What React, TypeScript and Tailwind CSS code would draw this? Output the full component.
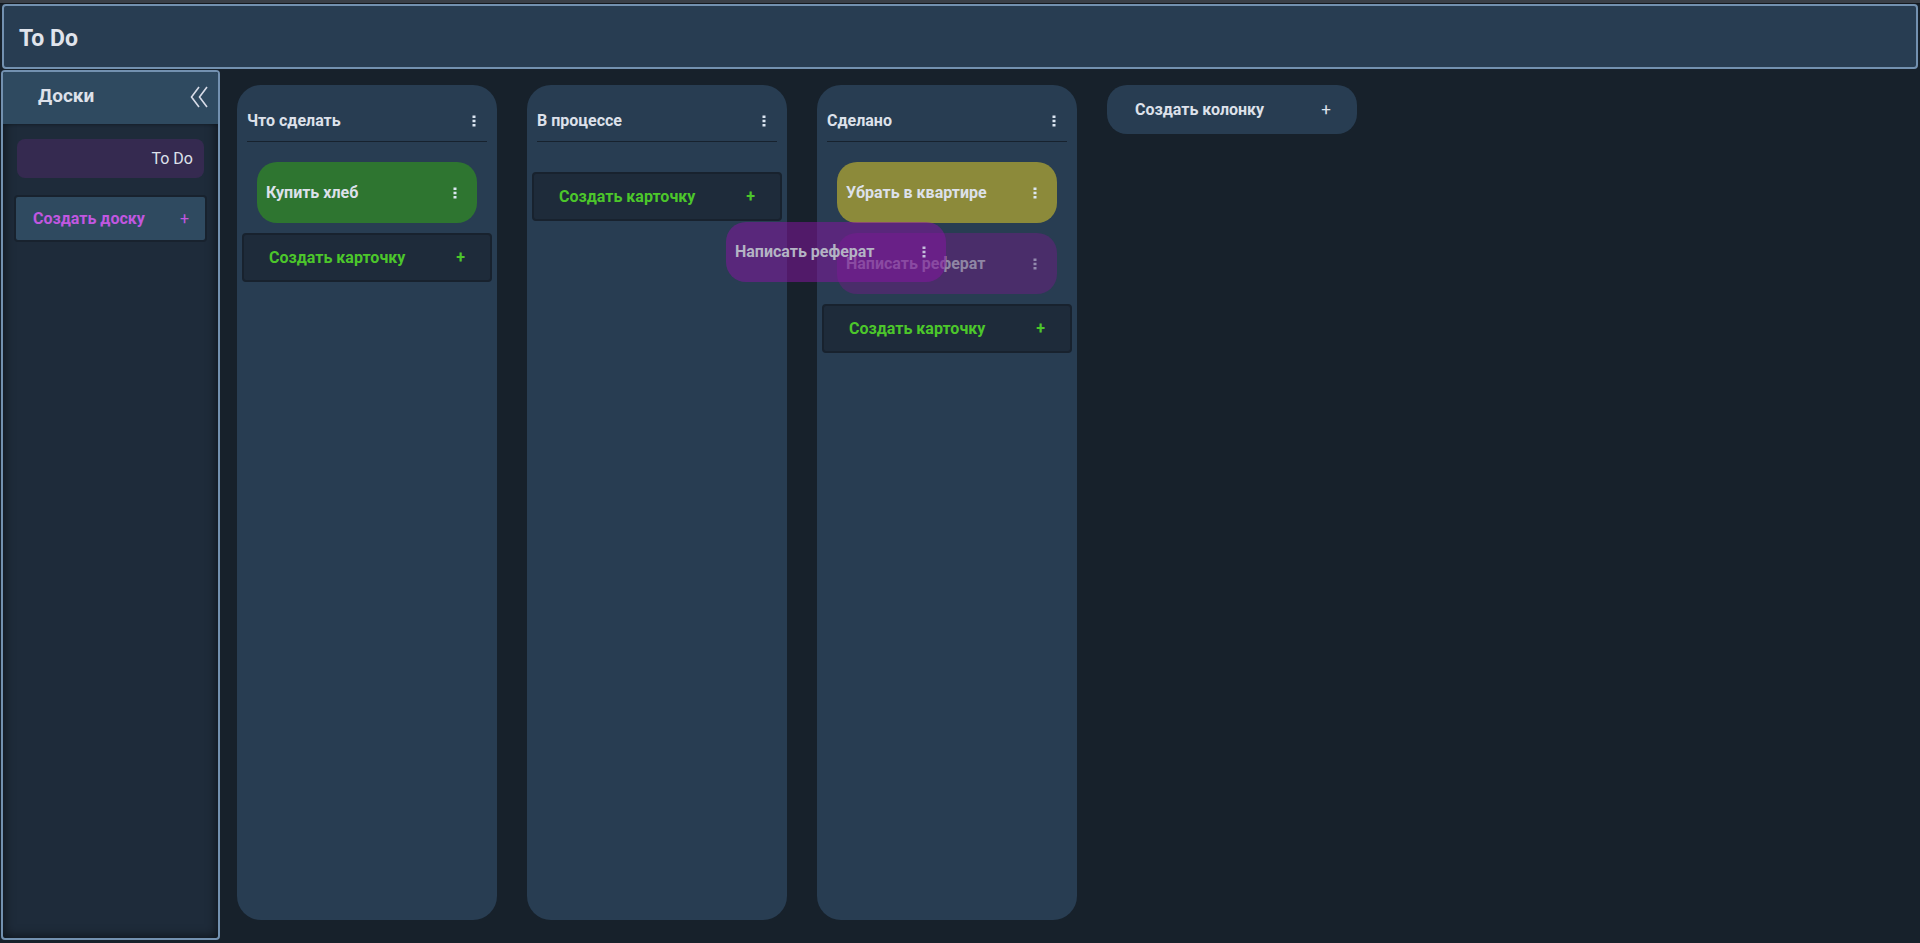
import * as React from 'react';

type CardType = {
  title: string;
  color: string;
  ghost?: boolean;
};

type ColumnType = {
  title: string;
  cards: CardType[];
};

const columns: ColumnType[] = [
  { title: 'Что сделать', cards: [{ title: 'Купить хлеб', color: 'bg-[#2e7530]' }] },
  { title: 'В процессе', cards: [] },
  {
    title: 'Сделано',
    cards: [
      { title: 'Убрать в квартире', color: 'bg-[#8c8a3a]' },
      { title: 'Написать реферат', color: 'bg-[#4a2d6a]', ghost: true },
    ],
  },
];

const Dots = ({ dim }: { dim?: boolean }) => (
  <svg width="4" height="12" viewBox="0 0 4 12" className={dim ? 'opacity-50' : ''}>
    <rect x="0.5" y="0.5" width="3" height="2.5" fill="#dbe6f2" />
    <rect x="0.5" y="4.75" width="3" height="2.5" fill="#dbe6f2" />
    <rect x="0.5" y="9" width="3" height="2.5" fill="#dbe6f2" />
  </svg>
);

const ChevronsLeft = () => (
  <svg width="18" height="22" viewBox="0 0 18 22" fill="none" stroke="#d8dce8" strokeWidth="1.6">
    <polyline points="9,1 1.5,11 9,21" />
    <polyline points="17,1 9.5,11 17,21" />
  </svg>
);

const Card = ({ card }: { card: CardType }) => (
  <div
    className={`${card.color} mx-[20px] h-[61px] rounded-[20px] flex items-center justify-between pl-[9px] pr-[20px]`}
  >
    <span
      className={`text-[16px] font-bold ${card.ghost ? 'text-[#8f86a4]' : 'text-[#dde1ea]'}`}
    >
      {card.title}
    </span>
    <Dots dim={card.ghost} />
  </div>
);

const Column = ({ column }: { column: ColumnType }) => (
  <div className="w-[260px] h-[835px] shrink-0 rounded-[24px] bg-[#283d52] flex flex-col">
    <div className="mx-[10px] pt-[26px] pb-[10px] flex items-center justify-between border-b border-[#17222e]">
      <span className="text-[16px] leading-[20px] font-bold text-[#dde1ea]">{column.title}</span>
      <span className="mr-[11px]">
        <Dots />
      </span>
    </div>
    <div className="pt-[20px] pb-[10px] flex flex-col gap-[10px]">
      {column.cards.map((card) => (
        <Card key={card.title} card={card} />
      ))}
    </div>
    <button
      type="button"
      className="mx-[5px] h-[49px] rounded-[4px] border-2 border-[#18222e] bg-[#1e2b3a] flex items-center justify-between px-[25px] text-[16px] font-bold text-[#4cc72b]"
    >
      <span>Создать карточку</span>
      <span className="text-[16px]">+</span>
    </button>
  </div>
);

const App = (): React.ReactNode => {
  return (
    <div
      className="relative h-[943px] overflow-hidden bg-[#17212b] flex flex-col"
      style={{ fontFamily: 'Roboto, "Liberation Sans", sans-serif' }}
    >
      <div className="h-[3px] bg-[#3a4048] shrink-0" />
      <div className="h-px bg-[#14191f] shrink-0" />
      <header className="mx-[2px] h-[65px] shrink-0 rounded-[4px] border-2 border-[#7391b0] bg-[#283d52] flex items-center px-[15px] pt-[5px]">
        <h1 className="text-[23px] font-bold text-[#e0e4ec]">To Do</h1>
      </header>

      <div className="flex flex-1 pt-px">
        <aside className="ml-px mb-[3px] w-[219px] shrink-0 rounded-[4px] border-2 border-[#7391b0] bg-[#1e2b3a] overflow-hidden flex flex-col shadow-[inset_0_0_12px_rgba(0,0,0,0.65)]">
          <div className="h-[52px] bg-[#2f4a60] flex items-center justify-between pl-[35px] pr-[10px] pb-[3px] shadow-[0_1px_3px_rgba(0,0,0,0.3)]">
            <span className="text-[19px] font-bold text-[#dde1ea]">Доски</span>
            <ChevronsLeft />
          </div>
          <div className="mx-[14px] mt-[15px] h-[39px] rounded-[8px] bg-[#352a50] flex items-center justify-end pr-[11px] text-[16px] text-[#dde1ea]">
            To Do
          </div>
          <button
            type="button"
            className="mx-[11px] mt-[17px] h-[47px] rounded-[4px] border-2 border-[#18222e] bg-[#2f4a60] flex items-center justify-between pl-[17px] pr-[16px] text-[16px] font-bold text-[#c157e0]"
          >
            <span>Создать доску</span>
            <span className="text-[16px] font-normal">+</span>
          </button>
        </aside>

        <main className="flex items-start gap-[30px] pl-[17px] pt-[15px]">
          {columns.map((column) => (
            <Column key={column.title} column={column} />
          ))}
          <button
            type="button"
            className="w-[250px] h-[49px] shrink-0 rounded-[20px] bg-[#283d52] flex items-center justify-between pl-[28px] pr-[26px] text-[16px] font-bold text-[#dde1ea]"
          >
            <span>Создать колонку</span>
            <span className="text-[17px] font-normal">+</span>
          </button>
        </main>
      </div>

      {/* карточка, которую тащат */}
      <div className="absolute left-[726px] top-[222px] w-[220px] h-[60px] rounded-[20px] bg-[rgba(134,20,160,0.53)] flex items-center justify-between pl-[9px] pr-[20px]">
        <span className="text-[16px] font-bold text-[#b4b4c4]">Написать реферат</span>
        <span className="opacity-80">
          <Dots />
        </span>
      </div>
    </div>
  );
};

export default App;
